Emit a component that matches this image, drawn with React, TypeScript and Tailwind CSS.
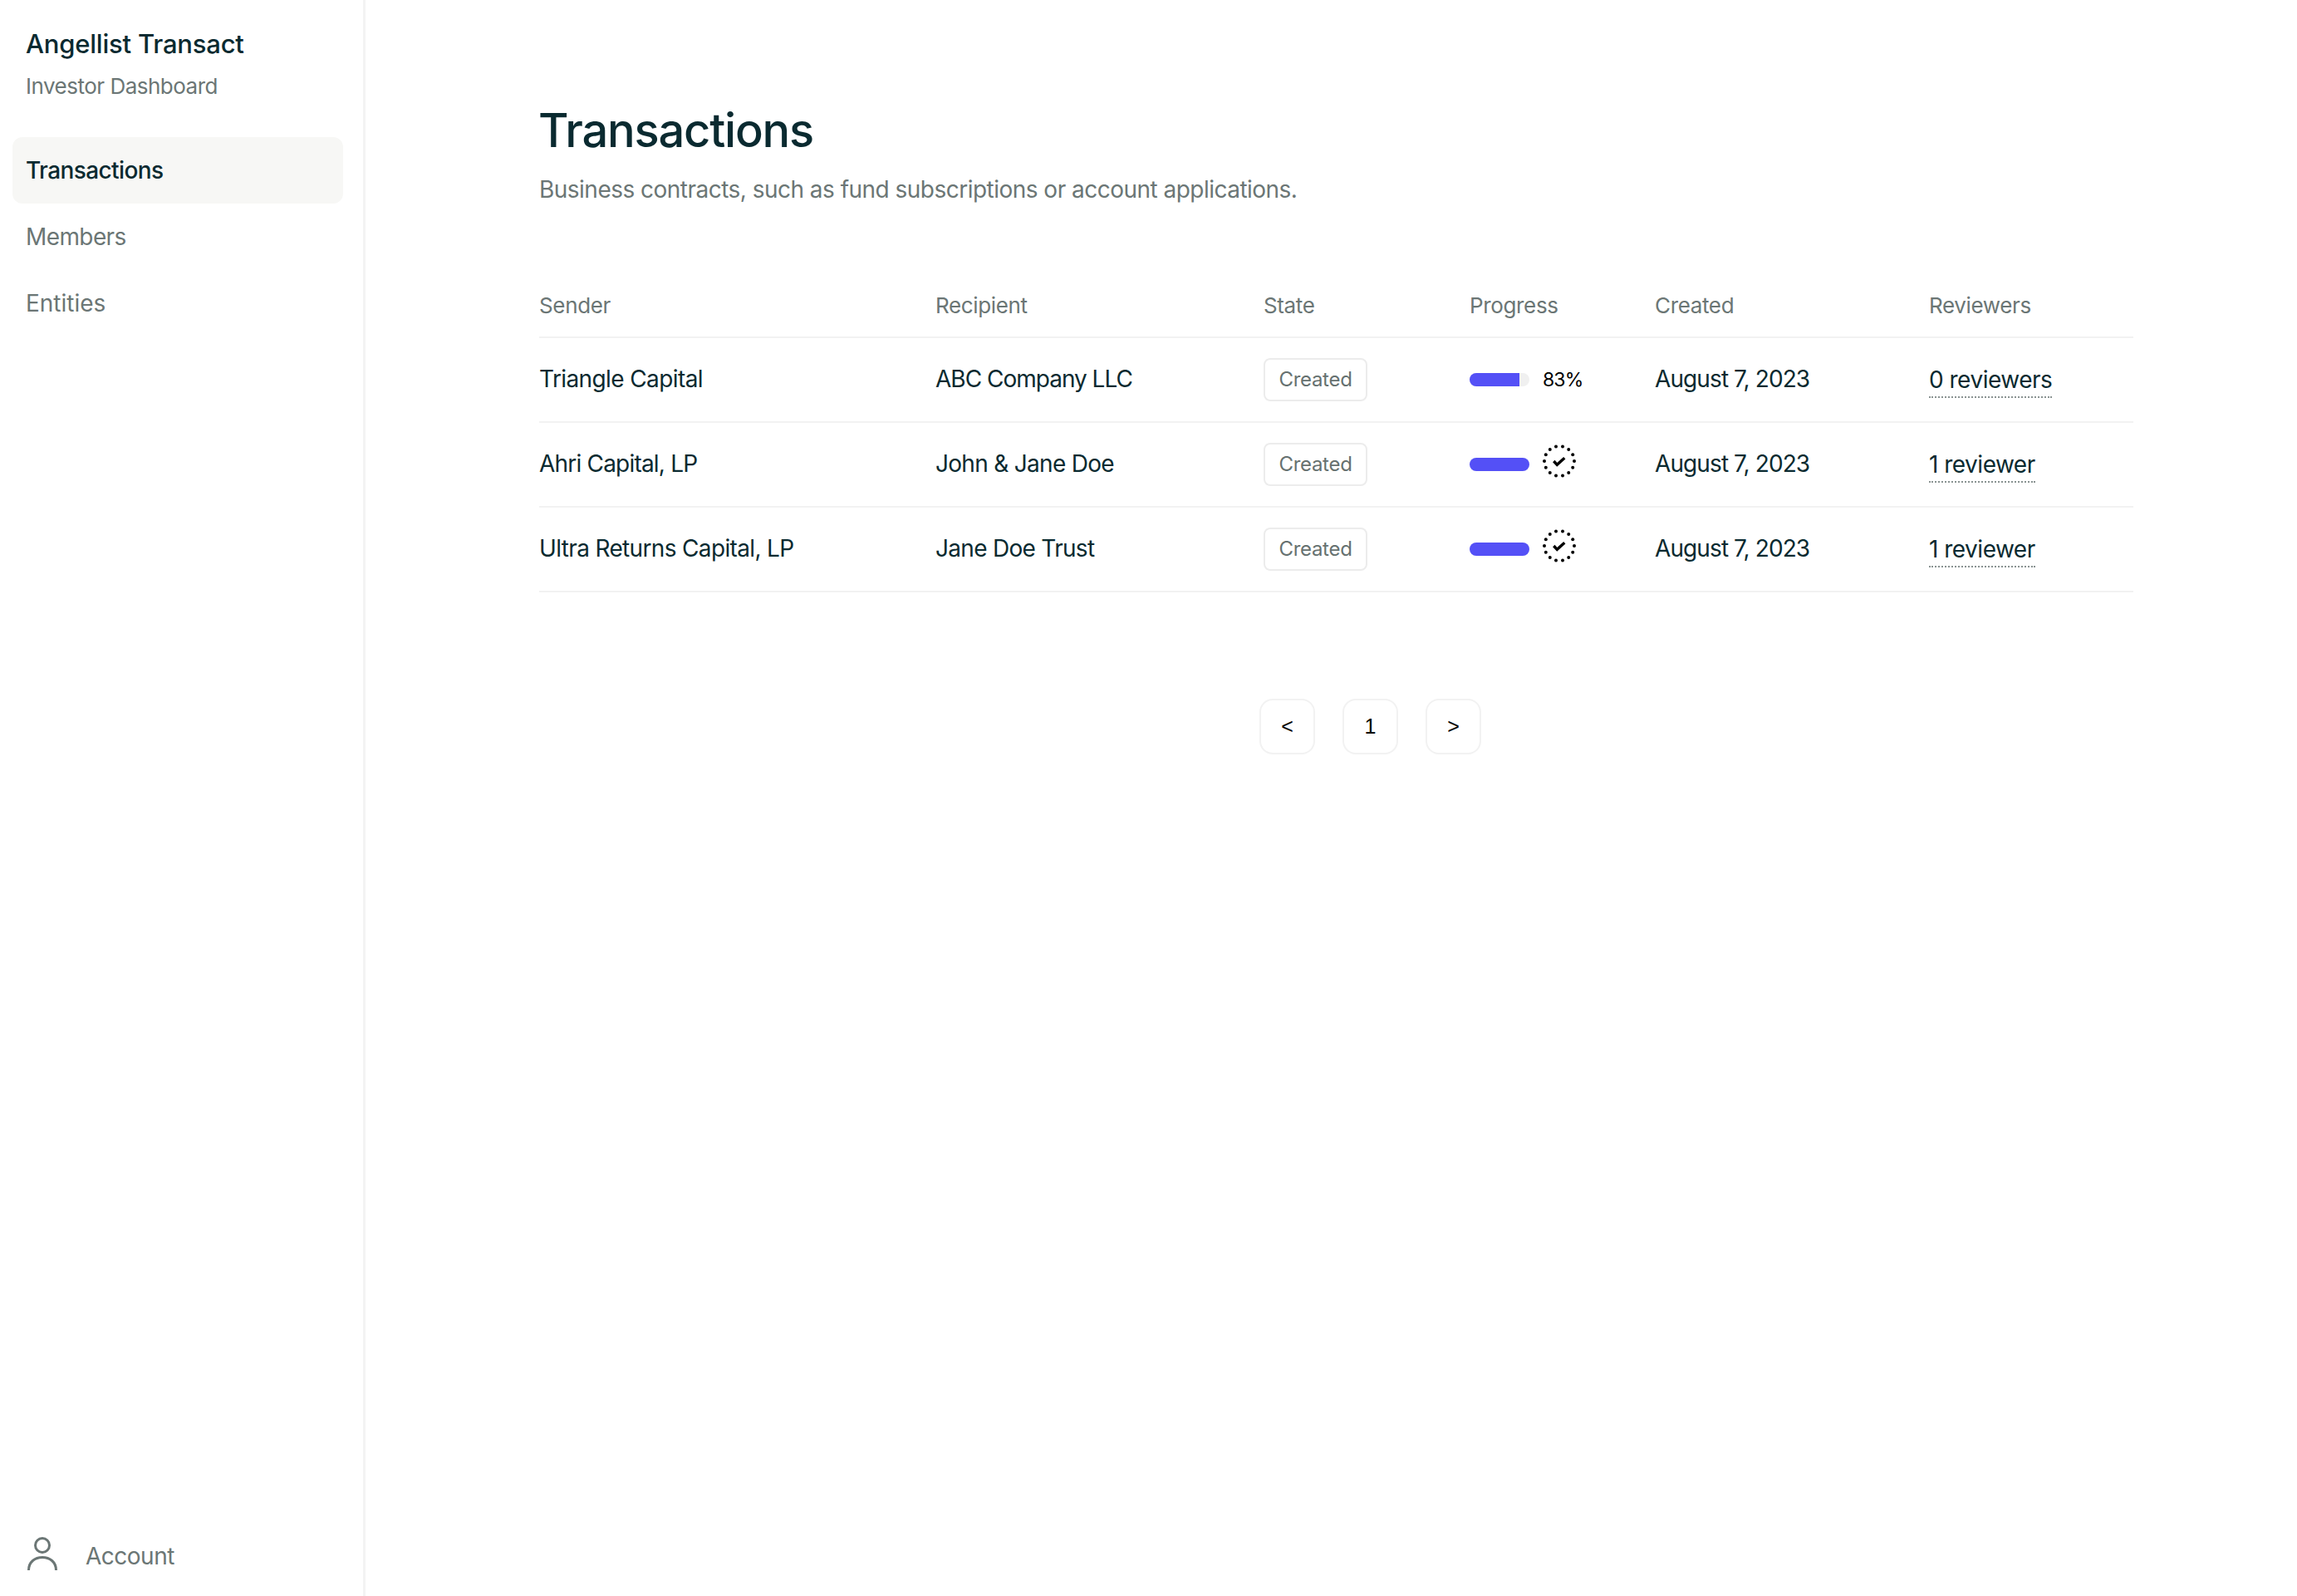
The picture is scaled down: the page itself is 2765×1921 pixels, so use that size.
const dark = "text-[#0a2a30]";

function DottedCheck() {
  const dots = Array.from({ length: 14 }, (_, i) => {
    const a = (i * Math.PI * 2) / 14;
    return { x: 20 + 18 * Math.cos(a), y: 20 + 18 * Math.sin(a) };
  });
  return (
    <svg width="40" height="40" viewBox="0 0 40 40" className="block -mt-[8px]">
      {dots.map((d, i) => (
        <circle key={i} cx={d.x} cy={d.y} r="2" fill="#000" />
      ))}
      <path d="M13.3 20 L17.3 24.3 L26.3 16.3" fill="none" stroke="#000" strokeWidth="3.4" />
    </svg>
  );
}

function Bar({ value }: { value: number }) {
  return (
    <div className="w-[72px] h-4 rounded-full bg-[#f0f0f0] overflow-hidden">
      <div className="h-full bg-[#5450f6]" style={{ width: `${value}%` }} />
    </div>
  );
}

function Row({ sender, senderTrack, recipient, recipientTrack, value, reviewers }: { sender: string; senderTrack: string; recipient: string; recipientTrack: string; value?: number; reviewers: string }) {
  return (
    <tr className="h-[102px] border-b-2 border-[#f2f2f2]">
      <td className={`p-0 pb-[2px] ${senderTrack} ${dark}`}>{sender}</td>
      <td className={`p-0 pb-[2px] ${recipientTrack} ${dark}`}>{recipient}</td>
      <td className="p-0">
        <span className="inline-flex items-center justify-center w-[125px] h-[52px] border-2 border-[#ececec] rounded-lg text-[24px] tracking-[-0.3px] text-[#667170]">Created</span>
      </td>
      <td className="p-0">
        <div className="flex items-center gap-4">
          <Bar value={value ?? 100} />
          {value ? <span className="text-[23px] tracking-[-0.9px] text-black">{value}%</span> : <DottedCheck />}
        </div>
      </td>
      <td className={`p-0 pb-[2px] tracking-[-0.9px] ${dark}`}>August 7, 2023</td>
      <td className="p-0">
        <span className={`inline-block leading-[39px] tracking-[-0.5px] border-b-2 border-dotted border-[#8a9392] ${dark}`}>{reviewers}</span>
      </td>
    </tr>
  );
}

export default function App() {
  return (
    <div className="flex h-[1921px] bg-white font-['Inter',sans-serif] overflow-hidden">
      <aside className="w-[440px] shrink-0 border-r-[3px] border-[#f3f3f3] flex flex-col">
        <div className="pl-[31px] pt-[31px]">
          <div className={`text-[31px] leading-[44px] font-medium tracking-[-0.2px] ${dark}`}>Angellist Transact</div>
          <div className="text-[26px] leading-[36px] mt-[11px] tracking-[-0.5px] text-[#6b7675]">Investor Dashboard</div>
        </div>
        <nav className="mt-[43px] pl-[15px] pr-[24px] flex flex-col text-[28px] text-[#6b7675]">
          <div className={`h-20 flex items-center pl-4 bg-[#f7f7f5] rounded-xl font-medium tracking-[-0.6px] ${dark}`}>Transactions</div>
          <div className="h-20 flex items-center pl-4 pb-[1px] tracking-[-0.6px]">Members</div>
          <div className="h-20 flex items-center pl-4 pb-[1px]">Entities</div>
        </nav>
        <div className="mt-auto mb-[30px] pl-[33px] flex items-center gap-[34px] text-[28px] text-[#6b7675]">
          <svg width="36" height="40" viewBox="0 0 36 40" fill="none" stroke="#6b7675" strokeWidth="3" className="block">
            <circle cx="18" cy="10" r="8.5" />
            <path d="M1.5 40 C1.5 30 9 24.5 18 24.5 C27 24.5 34.5 30 34.5 40" />
          </svg>
          <span className="relative top-[3px] tracking-[-0.5px]">Account</span>
        </div>
      </aside>
      <main className="flex-1 pl-[209px] pt-[122px]">
        <div className="w-[1919px]">
          <h1 className={`-ml-[1px] text-[56px] leading-[70px] font-medium tracking-[-1.2px] ${dark}`}>Transactions</h1>
          <p className="mt-[16px] text-[28px] leading-[40px] tracking-[-0.52px] text-[#6b7675]">Business contracts, such as fund subscriptions or account applications.</p>
          <table className="mt-[82px] w-full table-fixed border-collapse text-[28px] text-left">
            <colgroup>
              <col className="w-[477px]" />
              <col className="w-[395px]" />
              <col className="w-[248px]" />
              <col className="w-[223px]" />
              <col className="w-[330px]" />
              <col className="w-[246px]" />
            </colgroup>
            <thead>
              <tr className="h-[76px] border-b-2 border-[#f2f2f2] text-[26px] tracking-[-0.35px] text-[#6b7675]">
                <th className="p-0 font-normal">Sender</th>
                <th className="p-0 font-normal">Recipient</th>
                <th className="p-0 font-normal">State</th>
                <th className="p-0 font-normal">Progress</th>
                <th className="p-0 font-normal">Created</th>
                <th className="p-0 font-normal">Reviewers</th>
              </tr>
            </thead>
            <tbody>
              <Row sender="Triangle Capital" senderTrack="tracking-[-0.6px]" recipient="ABC Company LLC" recipientTrack="tracking-[-1px]" value={83} reviewers="0 reviewers" />
              <Row sender="Ahri Capital, LP" senderTrack="tracking-[-0.8px]" recipient="John & Jane Doe" recipientTrack="tracking-[-0.7px]" reviewers="1 reviewer" />
              <Row sender="Ultra Returns Capital, LP" senderTrack="tracking-[-0.65px]" recipient="Jane Doe Trust" recipientTrack="tracking-[-0.7px]" reviewers="1 reviewer" />
            </tbody>
          </table>
          <div className="mt-[128px] ml-[867px] flex gap-[33px] font-['Liberation_Sans',sans-serif] text-[25px] text-black">
            {["<", "1", ">"].map((t) => (
              <button key={t} className="w-[67px] h-[67px] border-2 border-[#f2f2f2] rounded-2xl flex items-center justify-center">{t}</button>
            ))}
          </div>
        </div>
      </main>
    </div>
  );
}
